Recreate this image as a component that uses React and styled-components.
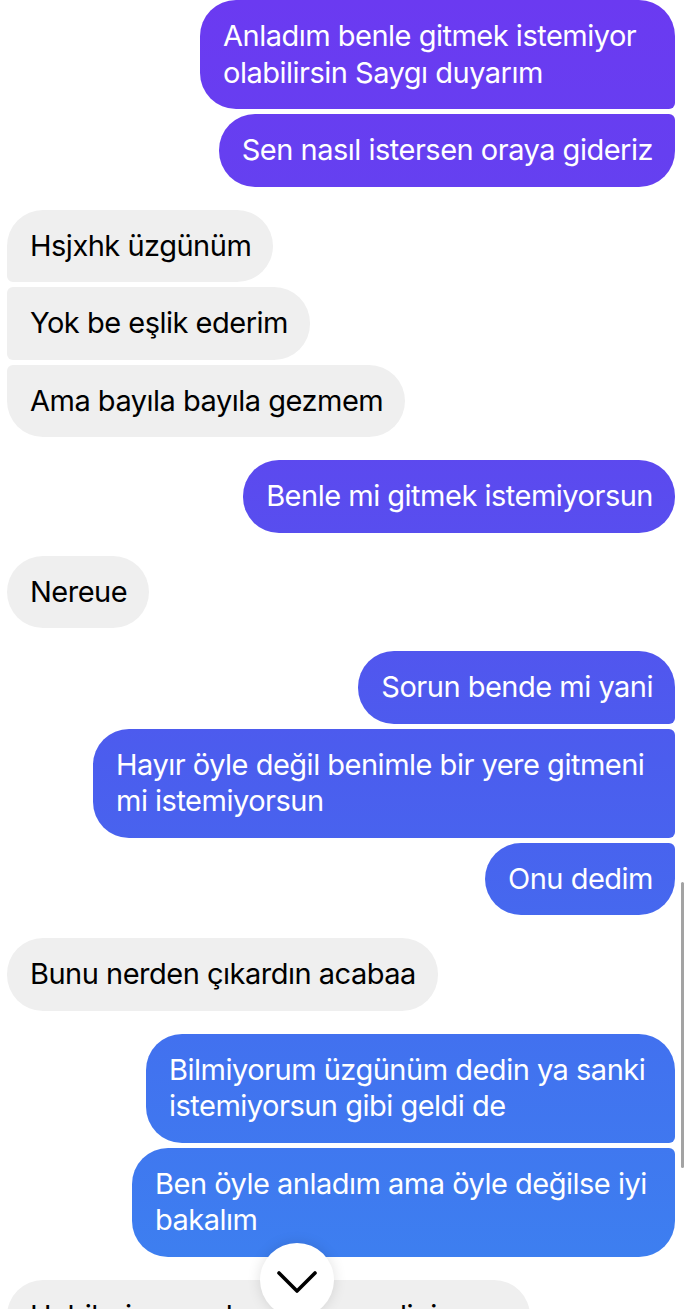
import React from "react";
import styled, { createGlobalStyle } from "styled-components";

const GlobalStyle = createGlobalStyle`
  html, body {
    margin: 0;
    padding: 0;
    background: #ffffff;
  }
  body {
    width: 690px;
    height: 1309px;
    overflow: hidden;
    font-family: "Inter", "Noto Sans", sans-serif;
  }
`;

const Screen = styled.div`
  position: relative;
  width: 690px;
  height: 1309px;
  overflow: hidden;
  background: #ffffff;
`;

const Thread = styled.div`
  display: flex;
  flex-direction: column;
  padding: 0 15px 0 7px;
`;

const Group = styled.div`
  display: flex;
  flex-direction: column;
  align-items: ${(p) => (p.$mine ? "flex-end" : "flex-start")};
  gap: 5px;
  margin-bottom: 23px;
`;

const big = "36px";
const small = "6px";

const radius = (mine, pos) => {
  const top = pos === "first" || pos === "single" ? big : small;
  const bottom = pos === "last" || pos === "single" ? big : small;
  return mine
    ? `${big} ${top} ${bottom} ${big}`
    : `${top} ${big} ${big} ${bottom}`;
};

const Bubble = styled.div`
  box-sizing: border-box;
  width: ${(p) => (p.$width ? `${p.$width}px` : "auto")};
  padding: 18px 22px 18px 23px;
  font-size: 29px;
  line-height: 36.5px;
  letter-spacing: -0.5px;
  white-space: pre-line;
  border-radius: ${(p) => radius(p.$mine, p.$pos)};
  color: ${(p) => (p.$mine ? "#ffffff" : "#000000")};
  background: ${(p) =>
    p.$mine
      ? "linear-gradient(180deg, #6b3af1 0%, #5c49ef 35%, #4b5dee 58%, #4270ef 78%, #3c82f0 100%) fixed"
      : "#efefef"};
`;

const ScrollBar = styled.div`
  position: absolute;
  left: 681px;
  top: 882px;
  width: 3px;
  height: 286px;
  border-radius: 2px;
  background: #a3a3a3;
`;

const DownButton = styled.div`
  position: absolute;
  left: 260px;
  top: 1243px;
  width: 74px;
  height: 74px;
  border-radius: 50%;
  background: #ffffff;
  box-shadow: 0 0 14px rgba(0, 0, 0, 0.12);
  display: flex;
  justify-content: center;
  padding-top: 28px;
  box-sizing: border-box;
`;

const groups = [
  {
    mine: true,
    items: [
      { text: "Anladım benle gitmek istemiyor\nolabilirsin Saygı duyarım", width: 475 },
      { text: "Sen nasıl istersen oraya gideriz" },
    ],
  },
  {
    mine: false,
    items: [
      { text: "Hsjxhk üzgünüm" },
      { text: "Yok be eşlik ederim" },
      { text: "Ama bayıla bayıla gezmem" },
    ],
  },
  { mine: true, items: [{ text: "Benle mi gitmek istemiyorsun" }] },
  { mine: false, items: [{ text: "Nereue" }] },
  {
    mine: true,
    items: [
      { text: "Sorun bende mi yani" },
      { text: "Hayır öyle değil benimle bir yere gitmeni\nmi istemiyorsun", width: 582 },
      { text: "Onu dedim" },
    ],
  },
  { mine: false, items: [{ text: "Bunu nerden çıkardın acabaa" }] },
  {
    mine: true,
    items: [
      { text: "Bilmiyorum üzgünüm dedin ya sanki\nistemiyorsun gibi geldi de", width: 529 },
      { text: "Ben öyle anladım ama öyle değilse iyi\nbakalım", width: 543 },
    ],
  },
  { mine: false, items: [{ text: "Uebilerine sıcak yaklaşamadigim için", width: 523 }] },
];

const position = (i, n) => {
  if (n === 1) return "single";
  if (i === 0) return "first";
  if (i === n - 1) return "last";
  return "middle";
};

const App = () => {
  return (
    <Screen>
      <GlobalStyle />
      <Thread>
        {groups.map((g, gi) => (
          <Group key={gi} $mine={g.mine}>
            {g.items.map((m, i) => (
              <Bubble
                key={i}
                $mine={g.mine}
                $width={m.width}
                $pos={position(i, g.items.length)}
              >
                {m.text}
              </Bubble>
            ))}
          </Group>
        ))}
      </Thread>
      <ScrollBar />
      <DownButton>
        <svg width="40" height="22" viewBox="0 0 40 22" fill="none">
          <polyline
            points="2,2 20,20 38,2"
            stroke="#000"
            strokeWidth="3.6"
            strokeLinecap="round"
            strokeLinejoin="round"
          />
        </svg>
      </DownButton>
    </Screen>
  );
};

export default App;
